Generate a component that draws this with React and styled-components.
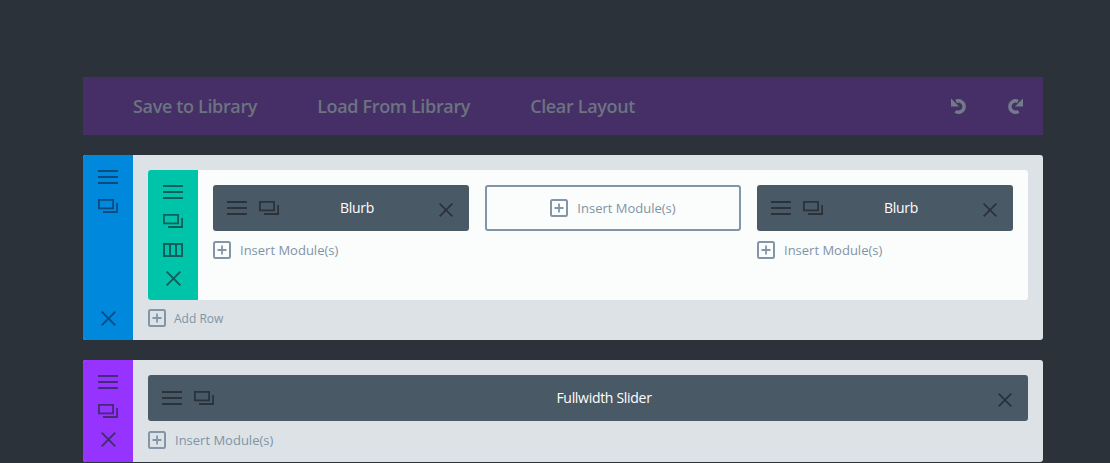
import React from "react";
import styled, { createGlobalStyle } from "styled-components";

const Global = createGlobalStyle`
  html, body { margin: 0; padding: 0; background: #2b323a; height: 100%; overflow: hidden; }
  * { box-sizing: border-box; }
  body { font-family: "Open Sans", "Liberation Sans", sans-serif; }
`;

const Page = styled.div`
  width: 960px;
  margin-left: 83px;
  padding-top: 77px;
  display: flex;
  flex-direction: column;
`;

const Toolbar = styled.div`
  height: 58px;
  background: #452f66;
  display: flex;
  align-items: center;
  padding: 0 20px 0 50px;
  margin-bottom: 20px;
`;

const ToolLink = styled.span`
  font-size: 18px;
  font-weight: 600;
  letter-spacing: -0.35px;
  color: #6b7480;
  margin-right: 60px;
  white-space: nowrap;
`;

const ToolIcons = styled.div`
  margin-left: auto;
  display: flex;
  gap: 40px;
  color: #727c89;
`;

const Section = styled.section`
  display: flex;
  background: #dde2e6;
  border-radius: 3px;
  overflow: hidden;
  height: ${(p) => p.$h}px;
  margin-bottom: 20px;
`;

const Side = styled.div`
  width: 50px;
  flex: none;
  background: ${(p) => p.$bg};
  color: ${(p) => p.$fg};
  padding: 7px 0;
  display: flex;
  flex-direction: column;
  align-items: center;
`;

const IconCell = styled.div`
  height: 29px;
  flex: none;
  display: flex;
  align-items: center;
  justify-content: center;
  margin-top: ${(p) => (p.$bottom ? "auto" : "0")};
`;

const Main = styled.div`
  flex: 1;
  min-width: 0;
  padding: 15px 15px 0;
  display: flex;
  flex-direction: column;
`;

const Row = styled.div`
  display: flex;
  height: 130px;
  background: #fbfcfc;
  border-radius: 3px;
  overflow: hidden;
`;

const Columns = styled.div`
  flex: 1;
  display: grid;
  grid-template-columns: repeat(3, 256px);
  column-gap: 16px;
  padding: 15px;
`;

const Column = styled.div`
  display: flex;
  flex-direction: column;
`;

const Module = styled.div`
  height: 46px;
  flex: none;
  display: flex;
  align-items: center;
  background: #4a5966;
  border-radius: 3px;
  color: #2b323a;
  padding: 0 16px 0 14px;
`;

const ModuleIcons = styled.div`
  display: flex;
  align-items: center;
  gap: 12px;
  margin-top: -1px;
`;

const ModuleTitle = styled.span`
  flex: 1;
  text-align: center;
  color: #fff;
  font-size: 14px;
  letter-spacing: -0.3px;
  padding-right: 4px;
  margin-top: -2px;
`;

const ModuleClose = styled.div`
  display: flex;
  margin-top: 4px;
`;

const Insert = styled.div`
  display: flex;
  align-items: center;
  gap: 9px;
  font-size: 13px;
  color: #8094a5;
  white-space: nowrap;
  margin-top: ${(p) => p.$mt || 0}px;
`;

const AddRow = styled(Insert)`
  font-size: 12px;
  gap: 8px;
`;

const EmptyModule = styled.div`
  height: 46px;
  border: 2px solid #8296a8;
  border-radius: 3px;
  display: flex;
  align-items: center;
  justify-content: center;
  gap: 9px;
  font-size: 13px;
  color: #8094a5;
`;

const Svg = styled.svg`
  display: block;
  flex: none;
`;

const Burger = () => (
  <Svg width="20" height="15" viewBox="0 0 20 15" fill="none" stroke="currentColor" strokeWidth="2">
    <path d="M0 2h20M0 8h20M0 14h20" />
  </Svg>
);
const Copy = () => (
  <Svg width="20" height="15" viewBox="0 0 20 15" fill="none" stroke="currentColor" strokeWidth="1.8">
    <path d="M.9 1.9h14.2v8.4H.9z" />
    <path d="M5 14h14.1V5" />
  </Svg>
);
const Cols = () => (
  <Svg width="20" height="15" viewBox="0 0 20 15" fill="none" stroke="currentColor" strokeWidth="2">
    <path d="M1 2h18v12H1zM7 2v12M13 2v12" />
  </Svg>
);
const Cross = ({ size = 15 }) => (
  <Svg width={size} height={size} viewBox="0 0 15 15" fill="none" stroke="currentColor" strokeWidth="1.9">
    <path d="M.7.7l13.6 13.6M14.3.7L.7 14.3" />
  </Svg>
);
const Plus = () => (
  <Svg width="18" height="18" viewBox="0 0 18 18" fill="none" stroke="#8296a8">
    <rect x="1" y="1" width="16" height="16" rx="1.5" strokeWidth="2" />
    <path d="M9 4.5v9M4.5 9h9" strokeWidth="1.8" />
  </Svg>
);
const Undo = () => (
  <Svg width="16" height="16" viewBox="0 0 16 16" fill="none">
    <path d="M5 3.4A5.7 5.7 0 1 1 4.4 13.4" stroke="currentColor" strokeWidth="3.4" />
    <path d="M0 .4V8.4h8z" fill="currentColor" />
  </Svg>
);
const Redo = () => (
  <Svg width="16" height="16" viewBox="0 0 16 16" fill="none">
    <path d="M11 3.4A5.7 5.7 0 1 0 11.6 13.4" stroke="currentColor" strokeWidth="3.4" />
    <path d="M16 .4V8.4H8z" fill="currentColor" />
  </Svg>
);

const BlurbModule = () => (
  <Module>
    <ModuleIcons>
      <Burger />
      <Copy />
    </ModuleIcons>
    <ModuleTitle>Blurb</ModuleTitle>
    <ModuleClose>
      <Cross size={14} />
    </ModuleClose>
  </Module>
);

const InsertLabel = ({ mt }) => (
  <Insert $mt={mt}>
    <Plus />
    Insert Module(s)
  </Insert>
);

export default function App() {
  return (
    <>
      <Global />
      <Page>
        <Toolbar>
          <ToolLink>Save to Library</ToolLink>
          <ToolLink>Load From Library</ToolLink>
          <ToolLink>Clear Layout</ToolLink>
          <ToolIcons>
            <Undo />
            <Redo />
          </ToolIcons>
        </Toolbar>

        <Section $h={185}>
          <Side $bg="#0088dd" $fg="#0d4a7d">
            <IconCell><Burger /></IconCell>
            <IconCell><Copy /></IconCell>
            <IconCell $bottom><Cross /></IconCell>
          </Side>
          <Main>
            <Row>
              <Side $bg="#00c4a9" $fg="#0c5f5c">
                <IconCell><Burger /></IconCell>
                <IconCell><Copy /></IconCell>
                <IconCell><Cols /></IconCell>
                <IconCell><Cross /></IconCell>
              </Side>
              <Columns>
                <Column>
                  <BlurbModule />
                  <InsertLabel mt={10} />
                </Column>
                <Column>
                  <EmptyModule>
                    <Plus />
                    Insert Module(s)
                  </EmptyModule>
                </Column>
                <Column>
                  <BlurbModule />
                  <InsertLabel mt={10} />
                </Column>
              </Columns>
            </Row>
            <AddRow $mt={9}>
              <Plus />
              Add Row
            </AddRow>
          </Main>
        </Section>

        <Section $h={102}>
          <Side $bg="#9733ff" $fg="#452a75">
            <IconCell><Burger /></IconCell>
            <IconCell><Copy /></IconCell>
            <IconCell><Cross /></IconCell>
          </Side>
          <Main>
            <Module>
              <ModuleIcons>
                <Burger />
                <Copy />
              </ModuleIcons>
              <ModuleTitle>Fullwidth Slider</ModuleTitle>
              <ModuleClose>
                <Cross size={14} />
              </ModuleClose>
            </Module>
            <InsertLabel mt={10} />
          </Main>
        </Section>
      </Page>
    </>
  );
}
